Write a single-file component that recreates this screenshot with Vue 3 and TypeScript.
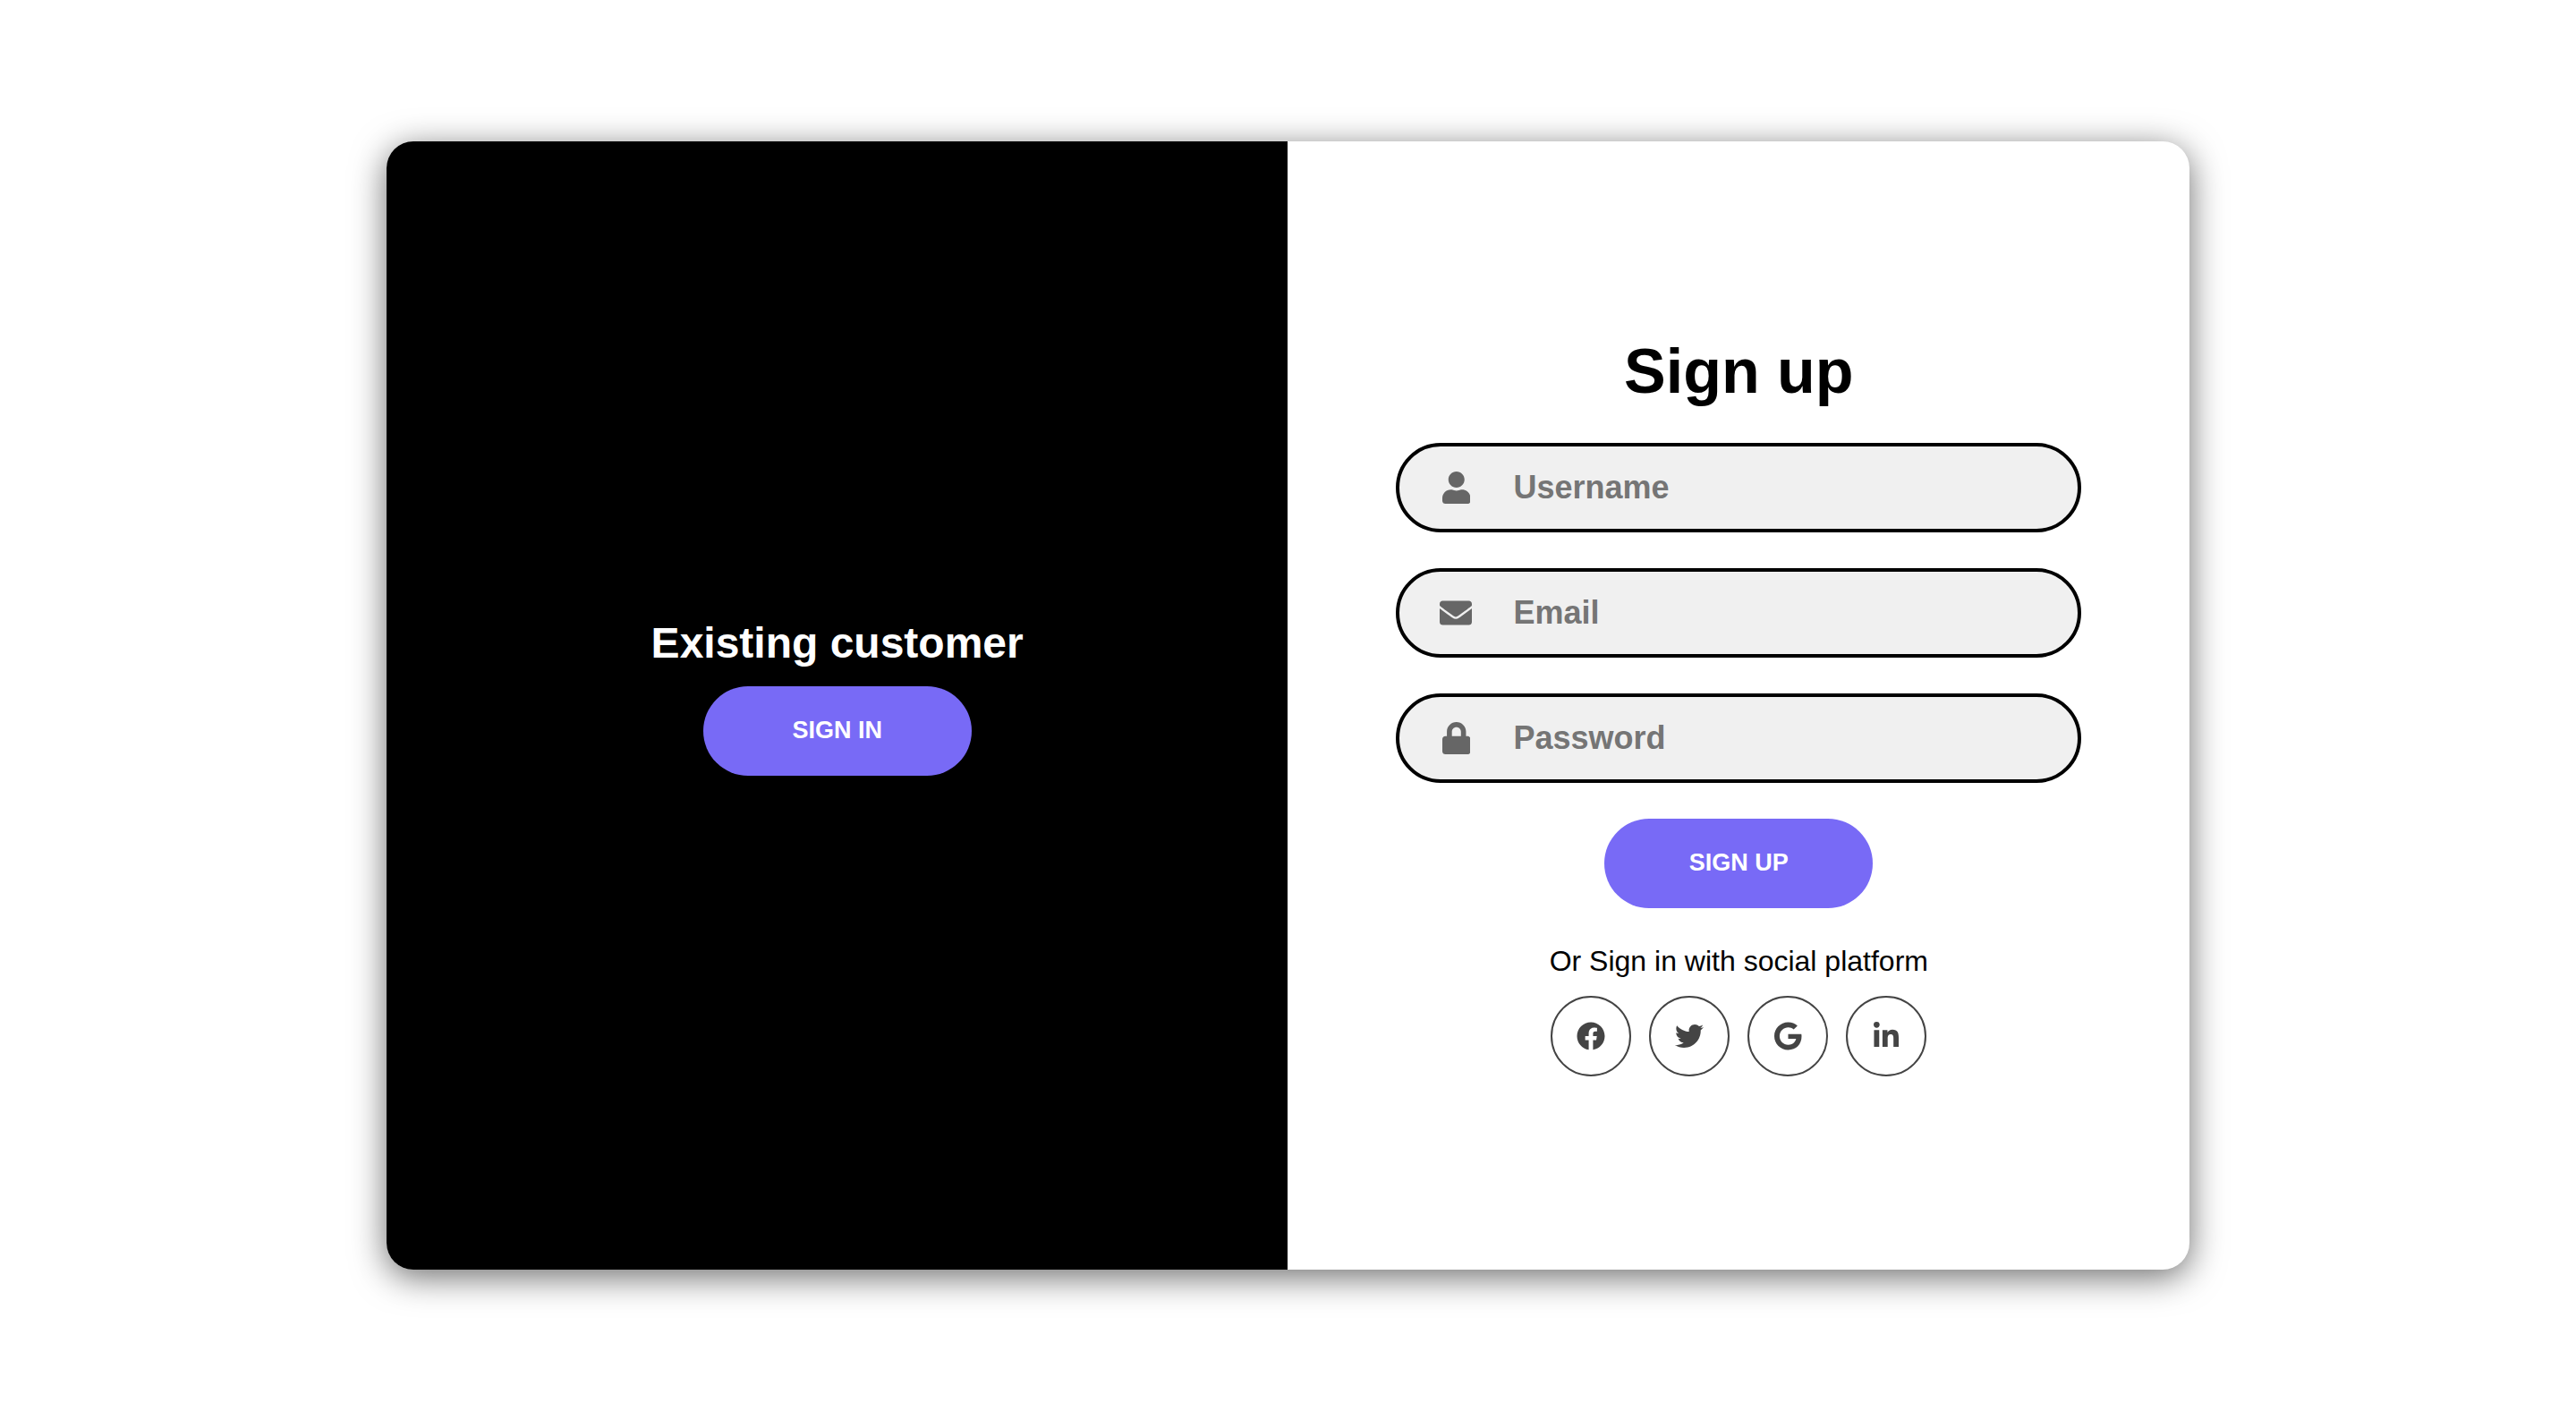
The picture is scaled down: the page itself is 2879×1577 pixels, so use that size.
<script setup lang="ts">
import { reactive } from 'vue'

interface Icon {
  viewBox: string
  path: string
}

interface Field extends Icon {
  id: 'username' | 'email' | 'password'
  type: string
  label: string
  autocomplete: string
}

interface SocialLink extends Icon {
  name: string
  href: string
}

const form = reactive({ username: '', email: '', password: '' })

const fields: Field[] = [
  {
    id: 'username',
    type: 'text',
    label: 'Username',
    autocomplete: 'username',
    viewBox: '0 0 448 512',
    path: 'M224 256c70.7 0 128-57.3 128-128S294.7 0 224 0 96 57.3 96 128s57.3 128 128 128zm89.6 32h-16.7c-22.2 10.2-46.9 16-72.9 16s-50.6-5.8-72.9-16h-16.7C60.2 288 0 348.2 0 422.4V464c0 26.5 21.5 48 48 48h352c26.5 0 48-21.5 48-48v-41.6c0-74.2-60.2-134.4-134.4-134.4z',
  },
  {
    id: 'email',
    type: 'email',
    label: 'Email',
    autocomplete: 'email',
    viewBox: '0 0 512 512',
    path: 'M502.3 190.8c3.9-3.1 9.7-.2 9.7 4.7V400c0 26.5-21.5 48-48 48H48c-26.5 0-48-21.5-48-48V195.6c0-5 5.7-7.8 9.7-4.7 22.4 17.4 52.1 39.5 154.1 113.6 21.1 15.4 56.7 47.8 92.2 47.6 35.7.3 72-32.8 92.3-47.6 102-74.1 131.6-96.3 154-113.7zM256 320c23.2.4 56.6-29.2 73.4-41.4 132.7-96.3 142.8-104.7 173.4-128.7 5.8-4.5 9.2-11.5 9.2-18.9v-19c0-26.5-21.5-48-48-48H48c-26.5 0-48 21.5-48 48v19c0 7.4 3.4 14.3 9.2 18.9 30.6 23.9 40.7 32.4 173.4 128.7 16.8 12.2 50.2 41.8 73.4 41.4z',
  },
  {
    id: 'password',
    type: 'password',
    label: 'Password',
    autocomplete: 'new-password',
    viewBox: '0 0 448 512',
    path: 'M400 224h-24v-72C376 68.2 307.8 0 224 0S72 68.2 72 152v72H48c-26.5 0-48 21.5-48 48v192c0 26.5 21.5 48 48 48h352c26.5 0 48-21.5 48-48V272c0-26.5-21.5-48-48-48zm-104 0H152v-72c0-39.7 32.3-72 72-72s72 32.3 72 72v72z',
  },
]

const socialLinks: SocialLink[] = [
  {
    name: 'Facebook',
    href: '#facebook',
    viewBox: '0 0 512 512',
    path: 'M504 256C504 119 393 8 256 8S8 119 8 256c0 123.78 90.69 226.38 209.25 245V327.69h-63V256h63v-54.64c0-62.15 37-96.48 93.67-96.48 27.14 0 55.52 4.84 55.52 4.84v61h-31.28c-30.8 0-40.41 19.12-40.41 38.73V256h68.78l-11 71.69h-57.78V501C413.31 479.38 504 379.78 504 256z',
  },
  {
    name: 'Twitter',
    href: '#twitter',
    viewBox: '0 0 512 512',
    path: 'M459.37 151.716c.325 4.548.325 9.097.325 13.645 0 138.72-105.583 298.558-298.558 298.558-59.452 0-114.68-17.219-161.137-47.106 8.447.974 16.568 1.299 25.34 1.299 49.055 0 94.213-16.568 130.274-44.832-46.132-.975-84.792-31.188-98.112-72.772 6.498.974 12.995 1.624 19.818 1.624 9.421 0 18.843-1.3 27.614-3.573-48.081-9.747-84.143-51.98-84.143-102.985v-1.299c13.969 7.797 30.214 12.67 47.431 13.319-28.264-18.843-46.781-51.005-46.781-87.391 0-19.492 5.197-37.36 14.294-52.954 51.655 63.675 129.3 105.258 216.365 109.807-1.624-7.797-2.599-15.918-2.599-24.04 0-57.828 46.782-104.934 104.934-104.934 30.213 0 57.502 12.67 76.67 33.137 23.715-4.548 46.456-13.32 66.599-25.34-7.798 24.366-24.366 44.833-46.132 57.827 21.117-2.273 41.584-8.122 60.426-16.243-14.292 20.791-32.161 39.308-52.628 54.253z',
  },
  {
    name: 'Google',
    href: '#google',
    viewBox: '0 0 488 512',
    path: 'M488 261.8C488 403.3 391.1 504 248 504 110.8 504 0 393.2 0 256S110.8 8 248 8c66.8 0 123 24.5 166.3 64.9l-67.5 64.9C258.5 52.6 94.3 116.6 94.3 256c0 86.5 69.1 156.6 153.7 156.6 98.2 0 135-70.4 140.8-106.9H248v-85.3h236.1c2.3 12.7 3.9 24.9 3.9 41.4z',
  },
  {
    name: 'LinkedIn',
    href: '#linkedin',
    viewBox: '0 0 448 512',
    path: 'M100.28 448H7.4V148.9h92.88zM53.79 108.1C24.09 108.1 0 83.5 0 53.8a53.79 53.79 0 0 1 107.58 0c0 29.7-24.1 54.3-53.79 54.3zM447.9 448h-92.68V302.4c0-34.7-.7-79.2-48.29-79.2-48.29 0-55.69 37.7-55.69 76.7V448h-92.78V148.9h89.08v40.8h1.3c12.4-23.5 42.69-48.3 87.88-48.3 94 0 111.28 61.9 111.28 142.3V448z',
  },
]
</script>

<template>
  <main class="page">
    <div class="card">
      <section class="panel panel-dark">
        <h2 class="panel-title">Existing customer</h2>
        <button type="button" class="btn">SIGN IN</button>
      </section>

      <section class="panel">
        <form class="form" @submit.prevent>
          <h1 class="form-title">Sign up</h1>

          <div class="fields">
            <div v-for="field in fields" :key="field.id" class="field">
              <label class="field-icon" :for="field.id" :aria-label="field.label">
                <svg :viewBox="field.viewBox" aria-hidden="true"><path :d="field.path" /></svg>
              </label>
              <input
                :id="field.id"
                v-model="form[field.id]"
                class="field-input"
                :type="field.type"
                :placeholder="field.label"
                :autocomplete="field.autocomplete"
              />
            </div>
          </div>

          <button type="submit" class="btn">SIGN UP</button>

          <p class="social-text">Or Sign in with social platform</p>
          <nav class="social">
            <a
              v-for="link in socialLinks"
              :key="link.name"
              class="social-link"
              :href="link.href"
              :aria-label="link.name"
            >
              <svg :viewBox="link.viewBox" aria-hidden="true"><path :d="link.path" /></svg>
            </a>
          </nav>
        </form>
      </section>
    </div>
  </main>
</template>

<style>
body {
  margin: 0;
  background: #fff;
}
</style>

<style scoped>
.page,
.page * {
  box-sizing: border-box;
}

.page {
  display: flex;
  align-items: center;
  justify-content: center;
  min-height: 100vh;
  font-family: "Liberation Sans", Arial, Helvetica, sans-serif;
  color: #000;
}

.card {
  display: grid;
  grid-template-columns: 1fr 1fr;
  width: 70vw;
  min-height: 80vh;
  overflow: hidden;
  border-radius: 30px;
  background: #fff;
  box-shadow: 0 8px 38px rgba(0, 0, 0, 0.58);
}

.panel {
  display: flex;
  flex-direction: column;
  align-items: center;
  justify-content: center;
}

.panel-dark {
  padding-bottom: 20px;
  background: #000;
  color: #fff;
}

.panel-title {
  margin: 0 0 20px;
  font-size: 48px;
  line-height: 56px;
  font-weight: 700;
}

.btn {
  width: 300px;
  height: 100px;
  padding: 0;
  border: 0;
  border-radius: 50px;
  background: #786af6;
  color: #fff;
  font-family: inherit;
  font-size: 27px;
  font-weight: 700;
  cursor: pointer;
}

.form {
  display: flex;
  flex-direction: column;
  align-items: center;
  width: 76%;
}

.form-title {
  margin: 0 0 40px;
  font-size: 70px;
  line-height: 80px;
  font-weight: 700;
}

.fields {
  display: flex;
  flex-direction: column;
  gap: 40px;
  width: 100%;
  margin-bottom: 40px;
}

.field {
  display: flex;
  align-items: center;
  gap: 46px;
  height: 100px;
  padding: 0 45px;
  border: 4px solid #000;
  border-radius: 50px;
  background: #f0f0f0;
}

.field-icon {
  display: flex;
  justify-content: center;
  width: 36px;
}

.field-icon svg {
  display: block;
  height: 36px;
  fill: #666;
}

.field-input {
  flex: 1;
  min-width: 0;
  padding: 0;
  border: 0;
  outline: 0;
  background: none;
  color: #333;
  font-family: inherit;
  font-size: 36px;
  font-weight: 700;
}

.field-input::placeholder {
  color: #757575;
}

.social-text {
  margin: 40px 0 20px;
  font-size: 32px;
  line-height: 38px;
}

.social {
  display: flex;
  gap: 20px;
}

.social-link {
  display: flex;
  align-items: center;
  justify-content: center;
  width: 90px;
  height: 90px;
  border: 2px solid #444;
  border-radius: 50%;
}

.social-link svg {
  display: block;
  height: 32px;
  fill: #444;
}
</style>
